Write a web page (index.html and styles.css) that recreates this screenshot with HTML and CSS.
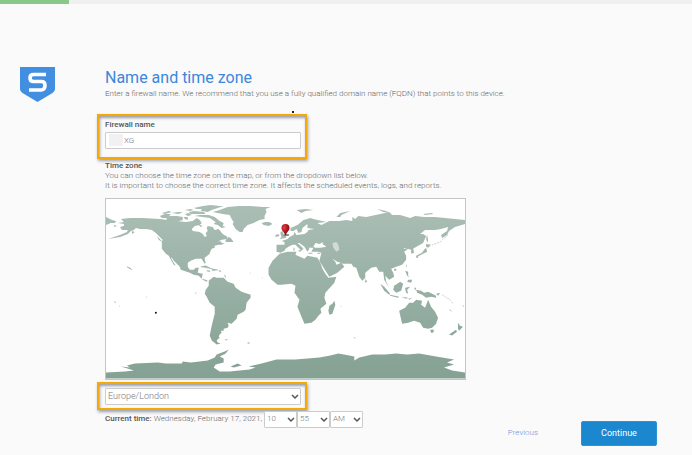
FILE: index.html
```html
<!DOCTYPE html>
<html lang="en">
<head>
<meta charset="utf-8">
<title>Name and time zone</title>
<link rel="stylesheet" href="styles.css">
</head>
<body>
<div class="progress"><div class="progress-fill"></div></div>
<div class="wizard">
  <svg class="logo" viewBox="0 0 35 35" aria-hidden="true">
    <path fill="#428fe1" d="M0 0h35v22q0 2.500-2.500 4L17.500 35 2.500 26Q0 24.500 0 22z"/>
    <path fill="none" stroke="#fff" stroke-width="3.600" d="M26 7.500H13.500Q10 7.500 10 11t3.500 3.500h8Q25 14.500 25 18.500t-3.500 4.500H9"/>
  </svg>
  <form class="content">
    <h1>Name and time zone</h1>
    <p class="intro">Enter a firewall name. We recommend that you use a fully qualified domain name (FQDN) that points to this device.</p>
    <div class="highlight name-box">
      <label for="fw">Firewall name</label>
      <div class="field"><input id="fw" type="text" value="XG"><span class="redacted"></span></div>
      <span class="speck"></span>
    </div>
    <label class="zone-label" for="zone">Time zone</label>
    <p>You can choose the time zone on the map, or from the dropdown list below.</p>
    <p>It is important to choose the correct time zone. It affects the scheduled events, logs, and reports.</p>
    <svg class="map" viewBox="0 0 360 180" role="img" aria-label="World map">
      <defs>
        <linearGradient id="land" gradientUnits="userSpaceOnUse" x1="0" y1="0" x2="0" y2="180"><stop offset="0" stop-color="#acbfb6"/><stop offset="1" stop-color="#84a193"/></linearGradient>
        <radialGradient id="pin" cx=".35" cy=".3" r=".7"><stop offset="0" stop-color="#d8474a"/><stop offset=".5" stop-color="#b3191f"/><stop offset="1" stop-color="#7d0b10"/></radialGradient>
      </defs>
      <g fill="url(#land)">
        <!-- North America -->
        <path d="M15 20L24 19 37 19 54 20 62 21 71 22 80 23 87 22 91 19 94 21 96 24 94 26 89 27 86 30 87 32 94 33 97 35 99 38 101 37 100 34 102 32 101 29 102 27 107 28 109 31 113 30 117 35 122 38 121 40 115 41 112 43 115 42 116 44 119 44 116 46 113 46 109 47 109 49 106 50 104 54 104 55 99 59 99 61 100 64 99 65 97 62 96 60 90 60 85 62 82 64 82 68 84 71 88 71 90 69 93 69 92 74 97 75 96 80 100 81 102 82 101 83 97 81 93 77 88 76 84 74 75 71 74 68 68 62 66 59 65 59 68 64 70 67 68 66 65 61 63 57 60 55 56 50 56 42 57 41 53 37 50 34 46 31 40 30 34 30 30 29 28 31 25 32 22 35 14 38 2 40 14 36 21 33 22 31 16 31 14 28 18 27 18 25 12 24 18 23z"/>
        <path d="M0 18L6 21 10 22 9 24 5 24 0 26zM8 26l3 1-3 1zM26 32l3 1-3 2zM51 37l4 4 2 2-4-2zM120 41l3-3 2 1 3 4-3 0-5 0z"/>
        <!-- Arctic islands and Greenland -->
        <path d="M54 17l5-2 6 0-3 4-6 0zM60 20l4-3 7 0 6 1 0 3-7 2-7-1zM56 14l7-2 3 1-7 2zM66 14l6-1 5 0-4 2zM79 15l4-1 3 2-4 1zM78 18l4 0 0 3-3-1zM89 17l5-1 9 0 6 2 5 4 4 2-1 3 3 1-4 1-4-3-4-1 2-2-6-4-7-1zM83 13l6-1 9 1 2 2-9 0-6 0zM79 11l6-1 3 1-4 1zM88 9l9-2 8-1 9 1 4 0-6 2-6 2-4 2-7-1 1-2-5 0zM92 25l5 2-2 1z"/>
        <path d="M107 13l7-2 8-3 11-1 12 0 13 1 7 0-5 2 1 3-2 4 0 3-5 1-6 3-6 2-4 4-1 3-3 0-4-3-3-5 1-2-2-3-2-4-7-1-5-1zM156 24l4-1 4 0 3 2-4 2-5-1z"/>
        <!-- Caribbean -->
        <path d="M95 68l5-1 6 3-5-1zM106 70l6 1-5 1zM101 72h3v1zM113 72h2v1zM119 76l1 3zM21 68l3 1 2 2-2-1z" stroke="#9fb5aa" stroke-width=".5"/>
        <!-- South America -->
        <path d="M103 82L108 78 111 79 118 79 122 83 128 85 130 89 136 93 145 96 145 99 141 104 140 111 138 113 132 116 131 120 126 125 122 124 123 127 122 129 118 130 118 132 115 132 116 134 114 136 113 138 114 139 111 142 112 144 115 145 111 146 106 142 104 137 106 127 109 115 109 108 104 104 101 98 99 95 100 91 103 87zM119 141l4 0-3 1zM142 144h2v1h-2zM89 94l2 0-1 1z"/>
        <!-- Africa and Madagascar -->
        <path d="M174 55L182 53 191 53 190 56 199 60 202 57 212 59 215 64 217 70 220 75 223 79 231 78 229 84 220 94 219 99 221 105 215 110 216 114 213 117 210 121 206 124 199 125 196 118 192 108 194 101 189 94 190 87 186 85 176 86 172 86 166 81 163 76 163 69 167 62 171 58zM229 102l1 4-3 9-3 1-1-4 1-5 3-2z"/>
        <!-- Eurasia -->
        <path d="M171 46L171 53 175 54 179 52 180 50 183 48 187 46 190 46 194 50 196 52 198 50 194 46 192 44 194 44 199 48 202 53 204 50 203 49 208 49 206 53 213 53 216 54 215 58 214 62 217 67 222 75 224 78 232 74 239 68 236 64 231 66 230 63 227 60 232 63 238 65 246 65 248 68 251 69 254 78 257 82 260 79 260 74 266 69 271 68 274 73 278 73 279 81 282 86 284 89 281 83 280 77 284 81 289 78 288 74 286 70 291 68 297 66 301 61 301 57 299 53 303 50 299 50 298 49 302 50 306 51 306 55 309 54 308 50 313 47 318 44 321 37 318 35 315 35 320 31 330 31 336 30 343 28 342 32 336 36 337 39 342 36 344 32 350 28 360 25 360 21 350 20 340 19 330 18 319 18 310 17 305 19 295 16 287 16 284 13 275 15 261 18 253 17 250 20 247 18 247 22 241 21 234 22 224 22 220 24 216 26 212 24 221 23 208 20 205 19 198 21 192 26 185 29 185 32 188 32 191 30 193 34 196 33 197 29 202 25 202 29 209 30 203 31 202 33 199 35 191 36 189 33 188 36 184 38 182 40 176 42 179 43 179 46z"/>
        <!-- Inland seas -->
        <path fill="#fff" d="M208 48l2-4 4 1 4-2-1 2 4 3-6 1-5 0z"/>
        <path fill="#fff" opacity=".5" d="M227 44l4-1 2 3 1 5-3 2-3-4z"/>
        <path d="M175 33l2-1 1 3 3 3-1 1-6 1 2-2-1-3zM170 36l3-1 1 2-4 1zM188 49h1v3h-1zM192 52l4-1-1 2zM203 54h4v1h-4zM212 54h3v1h-3zM191 11l9-1 8 1-8 1-4 2zM231 18l4-4 10-2-9 4-1 2zM226 10l12-1zM272 10l9 2 4 2-7-1zM318 15l9-1 1 1-8 1z"/>
        <!-- Asian islands and Oceania -->
        <path d="M322 36l1 5-1 3-1-5zM321 45l5 1-3 3-2-1zM321 49l1 4-4 2-6 3-1-1 6-3 2-3zM311 57h2v2h-2zM301 65l1 3-1 0zM289 70h2v2h-2zM260 80l2 3-2 1zM300 72l3 1 0 4 2 2-3-2zM303 81l4 0-1 3-4-1zM275 85l4 3 6 7-1 1-5-4zM285 96l9 2-1 1-8-2zM289 87l6-4 3 2-2 7-5 2-3-3zM300 89l5-1-3 3 1 4-2-1-1-4zM309 89l2 0-1 3zM296 98l7 1-2 1zM303 100l4-1-3 2zM311 91l5 1 3 2 4-1 8 4 0 2-5-1-5 1-4-3-5-2zM331 95l4-1-2 3zM336 95l4 2M344 110l3 3-2-1zM357 107h2v1z"/>
        <path d="M294 112l6-3 4-5 4 0 3-3 6 1-1 4 4 3 3-8 3 7 4 5 3 6-2 6-4 4-4 1-5-1-3-5-6-2-6 2-6 1-1-4zM325 131l4 0-1 3-2 0zM353 124l2 3 3 1-4 4-1-2zM351 131l1 2-5 4-3-1z"/>
        <path d="M7 103h3v1zM13 107h1v1zM30 105l2 1zM235 107h1v1zM248 139h2v1zM144 74h1v1zM156 79h1v1zM324 126h1v1zM40 98h1v1z"/>
        <path fill="none" stroke="#a5b8af" d="M343 36l-8 7-8 3M337 96l8 5 3 4"  stroke-width=".6" stroke-dasharray="2 1"/>
        <!-- Antarctica -->
        <path d="M0 174L19 173 28 172 15 168 24 169 21 167 29 165 52 164 60 165 76 165 77 163 85 164 94 163 102 162 109 159 111 156 119 153 123 151 120 155 114 158 118 160 118 164 110 166 108 169 114 173 124 173 144 171 150 169 143 168 156 165 171 161 190 161 214 159 225 157 233 155 244 157 249 158 249 162 254 159 267 156 280 156 291 155 302 156 314 155 331 158 349 161 342 164 349 166 339 169 347 172 360 174V180H0zM125 168l7-3 4 2-8 2z"/>
      </g>
      <circle cx="50" cy="114" r="1" fill="#111"/>
      <ellipse cx="181" cy="36" rx="3" ry="1" fill="#26322b" opacity=".6"/>
      <path fill="url(#pin)" d="M180 37c-1-4-4-5-4-8a4 4 0 0 1 8 0c0 3-3 4-4 8z"/>
    </svg>
    <div class="highlight zone-box">
      <div class="pick"><select id="zone"><option>Europe/London</option></select><svg viewBox="0 0 8 6"><path d="M1 1l3 3 3-3"/></svg></div>
    </div>
    <div class="footer">
      <div class="time">
        <p><b>Current time:</b> Wednesday, February 17, 2021,</p>
        <div class="pick"><select aria-label="Hour"><option>10</option></select><svg viewBox="0 0 8 6"><path d="M1 1l3 3 3-3"/></svg></div>
        <div class="pick"><select aria-label="Minute"><option>55</option></select><svg viewBox="0 0 8 6"><path d="M1 1l3 3 3-3"/></svg></div>
        <div class="pick"><select aria-label="AM or PM"><option>AM</option></select><svg viewBox="0 0 8 6"><path d="M1 1l3 3 3-3"/></svg></div>
      </div>
      <div class="actions">
        <a href="#">Previous</a>
        <button type="button">Continue</button>
      </div>
    </div>
  </form>
</div>
</body>
</html>
```
FILE: styles.css
```css
* { box-sizing: border-box; }
body { margin: 0; background: #fafafa; color: #666; font: 300 8px/10px Roboto, "Liberation Sans", sans-serif; }
h1, p { margin: 0; }
.progress { height: 4px; background: #f0f0f0; }
.progress-fill { width: 10%; height: 4px; background: #86c98b; }
.wizard { display: grid; grid-template-columns: 35px minmax(0, 1fr); column-gap: 50px; padding: 63px 35px 10px 20px; }
.logo { width: 35px; height: 35px; }
h1 { color: #3b87dc; font-size: 16px; line-height: 20px; font-weight: 400; margin-top: 1px; }
.intro { margin-top: 1px; }
label { display: block; color: #555; font-weight: 500; }
.highlight { position: relative; width: 210px; margin-left: -8px; padding: 4px 4px 4px 6px; border: 2px solid #f7a809; box-shadow: 1px 2px 3px rgba(60, 70, 90, .5), inset 1px 2px 3px rgba(60, 70, 90, .5); }
.name-box { margin-top: 15px; padding-bottom: 8px; }
.field { position: relative; margin-top: 2px; }
input, select { display: block; appearance: none; width: 100%; height: 17px; margin: 0; border: 1px solid #ccc; border-radius: 1px; background: #fff; color: #777; font: inherit; }
input { padding: 0 4px 0 18px; }
.redacted { position: absolute; left: 4px; top: 2px; width: 14px; height: 12px; background: #f1f1f1; }
.speck { position: absolute; right: 11px; top: -5px; width: 2px; height: 2px; background: #222; }
.zone-label { margin-top: 2px; }
.map { display: block; box-sizing: content-box; width: 359px; max-width: 100%; margin-top: 7px; border: 1px solid #c5c5c5; background: #fff; }
.zone-box { margin-top: 2px; padding-bottom: 3px; }
.pick { position: relative; }
.pick svg { position: absolute; right: 2px; top: 6px; width: 8px; height: 6px; fill: none; stroke: #555; stroke-width: 1.500; pointer-events: none; }
select { padding: 0 12px 0 2px; }
.zone-box select { font-size: 9px; }
.footer { display: flex; justify-content: space-between; align-items: flex-start; margin-top: 1px; }
.time { display: flex; align-items: center; }
.time p { margin-right: 2px; }
.time b { color: #555; font-weight: 500; }
.time .pick { width: 33px; }
.actions { display: flex; align-items: center; gap: 43px; margin-top: 10px; }
.actions a { color: #6f93d8; text-decoration: none; }
.actions button { width: 76px; height: 25px; border: 1px solid #2c93d6; border-radius: 2px; background: #1a87cf; color: #fff; font: 9px/12px Roboto, sans-serif; }
```
